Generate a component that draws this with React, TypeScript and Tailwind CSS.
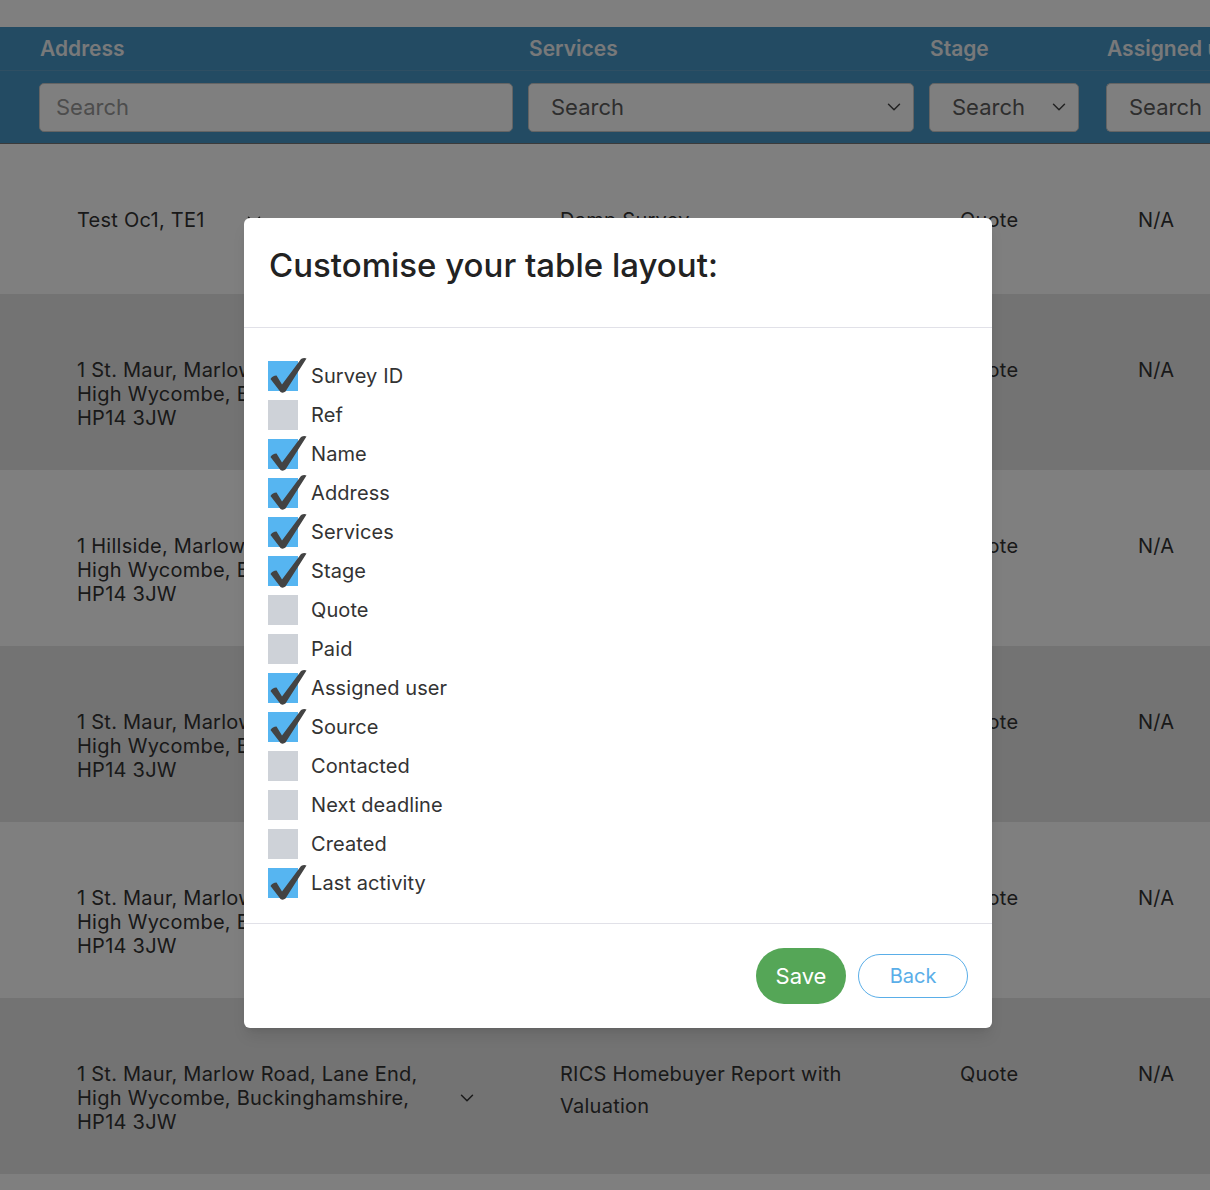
import { ChevronDown } from 'lucide-react';

const options = [
  { label: 'Survey ID', on: true },
  { label: 'Ref', on: false },
  { label: 'Name', on: true },
  { label: 'Address', on: true },
  { label: 'Services', on: true },
  { label: 'Stage', on: true },
  { label: 'Quote', on: false },
  { label: 'Paid', on: false },
  { label: 'Assigned user', on: true },
  { label: 'Source', on: true },
  { label: 'Contacted', on: false },
  { label: 'Next deadline', on: false },
  { label: 'Created', on: false },
  { label: 'Last activity', on: true },
];

const stMaur = ['1 St. Maur, Marlow Road, Lane End,', 'High Wycombe, Buckinghamshire,', 'HP14 3JW'];

const rows = [
  { address: ['Test Oc1, TE1'], services: ['Damp Survey'], h: 'h-[150px]', bg: 'bg-white' },
  { address: stMaur, services: ['RICS Homebuyer Report with', 'Valuation'], h: 'h-[176px]', bg: 'bg-[#e6e6e6]' },
  { address: ['1 Hillside, Marlow Road, Lane End,', 'High Wycombe, Buckinghamshire,', 'HP14 3JW'], services: ['RICS Homebuyer Report with', 'Valuation'], h: 'h-[176px]', bg: 'bg-white' },
  { address: stMaur, services: ['RICS Homebuyer Report with', 'Valuation'], h: 'h-[176px]', bg: 'bg-[#e6e6e6]' },
  { address: stMaur, services: ['RICS Homebuyer Report with', 'Valuation'], h: 'h-[176px]', bg: 'bg-white' },
  { address: stMaur, services: ['RICS Homebuyer Report with', 'Valuation'], h: 'h-[176px]', bg: 'bg-[#e6e6e6]' },
];

function Check() {
  return (
    <svg className="absolute left-0 top-[-4px]" width="40" height="37" viewBox="0 0 40 37">
      <path
        d="M2.5 22 Q4.5 18.5 8.5 18.5 L14 27.5 L33 2 Q36 0.5 38.5 1.5 L17.5 34.5 Q15 36.5 12.5 35 Z"
        fill="#434343"
      />
    </svg>
  );
}

function Option({ label, on }: { label: string; on: boolean }) {
  return (
    <label className="flex items-center h-[39px] gap-[13px]">
      <span className={`relative block w-[30px] h-[30px] ${on ? 'bg-[#56b5f1]' : 'bg-[#ced2d8]'}`}>
        {on && <Check />}
      </span>
      <span className="text-[20px] text-[#333] tracking-[0.1px]">{label}</span>
    </label>
  );
}

export default function App() {
  return (
    <div className="relative min-h-screen bg-white overflow-hidden text-[#333]" style={{ fontFamily: 'Inter, "Noto Sans", sans-serif' }}>
      <div className="h-[27px] bg-white" />

      {/* table head */}
      <div className="bg-[#4696c6] border-b border-[#777]">
        <div className="flex h-[44px] items-center pl-[40px] text-[21px] font-semibold text-[#f0f2f4] border-b border-[#5e9fc7] whitespace-nowrap">
          <div className="w-[489px] shrink-0">Address</div>
          <div className="w-[401px] shrink-0">Services</div>
          <div className="w-[177px] shrink-0">Stage</div>
          <div className="shrink-0">Assigned user</div>
        </div>
        <div className="flex h-[72px] items-center pl-[39px] whitespace-nowrap">
          <div className="w-[489px] shrink-0">
            <div className="w-[474px] h-[49px] rounded-[5px] border border-[#c8c8c8] bg-white flex items-center px-[16px] text-[22px] text-[#9a9a9a]">Search</div>
          </div>
          <div className="w-[401px] shrink-0">
            <div className="w-[386px] h-[49px] rounded-[5px] border border-[#c8c8c8] bg-white flex items-center justify-between pl-[22px] pr-[8px] text-[22px] text-[#5c5c5c]">
              Search
              <ChevronDown size={22} strokeWidth={1.6} className="text-[#444]" />
            </div>
          </div>
          <div className="w-[177px] shrink-0">
            <div className="w-[150px] h-[49px] rounded-[5px] border border-[#c8c8c8] bg-white flex items-center justify-between pl-[22px] pr-[8px] text-[22px] text-[#5c5c5c]">
              Search
              <ChevronDown size={22} strokeWidth={1.6} className="text-[#444]" />
            </div>
          </div>
          <div className="w-[150px] shrink-0 h-[49px] rounded-l-[5px] border border-r-0 border-[#c8c8c8] bg-white flex items-center pl-[22px] text-[22px] text-[#5c5c5c]">Search</div>
        </div>
      </div>

      {/* table body */}
      {rows.map((r, i) => (
        <div key={i} className={`flex pl-[39px] ${r.h} ${r.bg} text-[20px] text-[#333] tracking-[0.25px] whitespace-nowrap`}>
          <div className="w-[489px] shrink-0 pl-[38px] pt-[64px]">
            <div className="flex items-center gap-[38px]">
              <div className="leading-6">
                {r.address.map((l) => (
                  <div key={l}>{l}</div>
                ))}
              </div>
              <ChevronDown size={22} strokeWidth={1.6} className="text-[#333] shrink-0" />
            </div>
          </div>
          <div className="w-[401px] shrink-0 pl-[32px] pt-[60px] leading-8">
            {r.services.map((l) => (
              <div key={l}>{l}</div>
            ))}
          </div>
          <div className="w-[177px] shrink-0 pl-[31px] pt-[64px] leading-6">Quote</div>
          <div className="shrink-0 pl-[32px] pt-[64px] leading-6">N/A</div>
        </div>
      ))}

      {/* overlay */}
      <div className="absolute inset-0 bg-black/50">
        <div className="ml-[244px] mt-[218px] w-[748px] rounded-[6px] bg-white shadow-lg">
          <div className="h-[110px] px-[25px] pt-[26px] border-b border-[#e1e1e8]">
            <h2 className="text-[33px] leading-[42px] font-medium text-[#222]">Customise your table layout:</h2>
          </div>
          <div className="px-[24px] pt-[28px] pb-[21px] border-b border-[#e1e1e8]">
            {options.map((o) => (
              <Option key={o.label} label={o.label} on={o.on} />
            ))}
          </div>
          <div className="h-[104px] flex items-center justify-end gap-[12px] px-[24px]">
            <button className="w-[90px] h-[56px] rounded-full bg-[#55a657] text-white text-[22px]">Save</button>
            <button className="w-[110px] h-[44px] rounded-full border border-[#5aaee8] bg-white text-[#5aaee8] text-[20px]">Back</button>
          </div>
        </div>
      </div>
    </div>
  );
}
